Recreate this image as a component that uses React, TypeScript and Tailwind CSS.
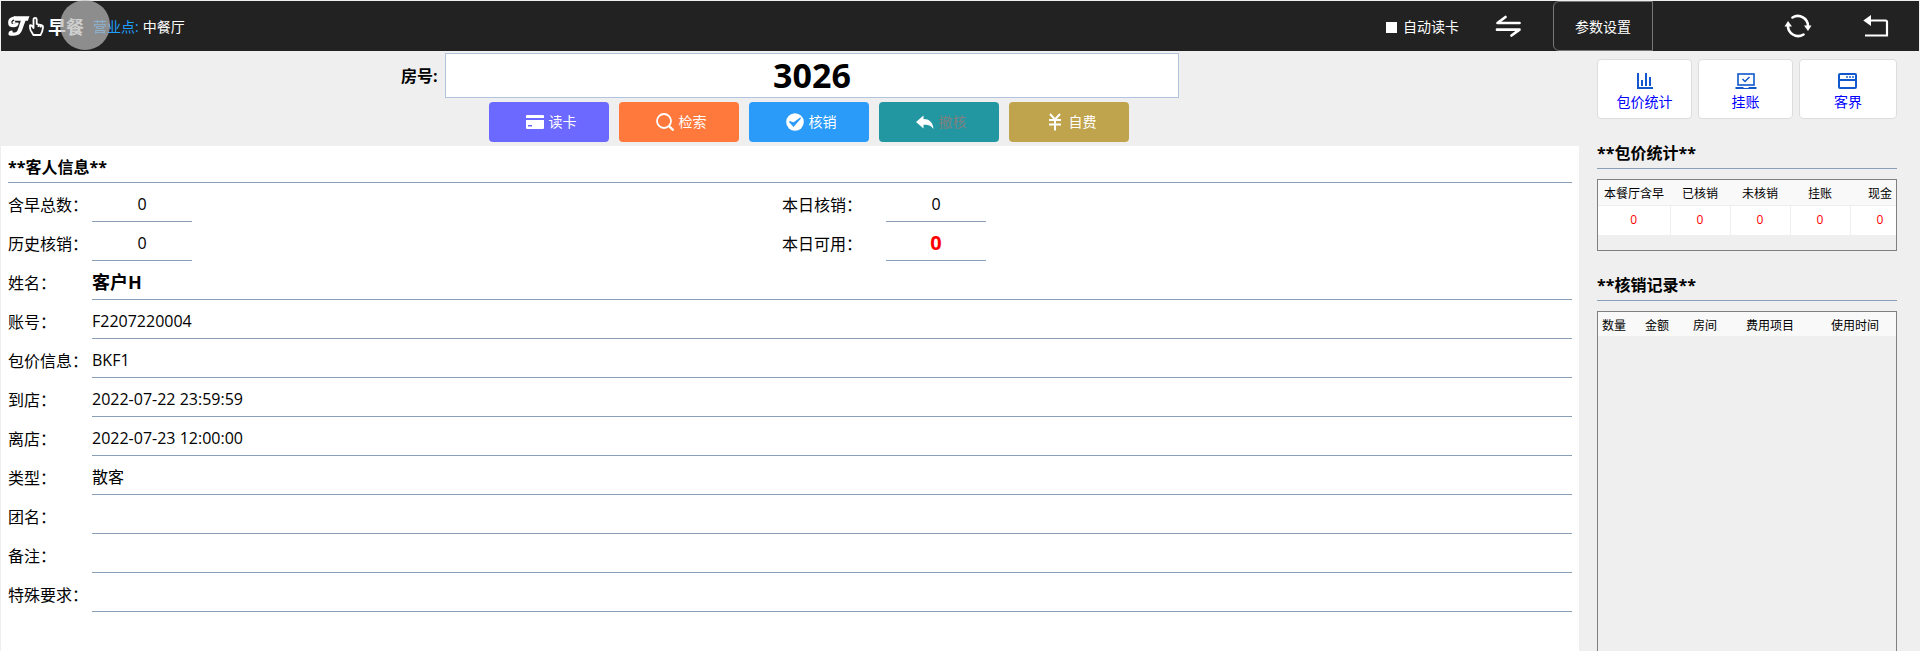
import { useState } from 'react'
import type { ReactNode } from 'react'

type Field = {
  id: string
  label: string
  value: string
  className?: string
}

const counters: Field[][] = [
  [
    { id: 'total', label: '含早总数：', value: '0' },
    { id: 'today-used', label: '本日核销：', value: '0' }
  ],
  [
    { id: 'history-used', label: '历史核销：', value: '0' },
    { id: 'today-left', label: '本日可用：', value: '0', className: 'text-xl font-bold text-[#ff0000]' }
  ]
]

const details: Field[] = [
  { id: 'name', label: '姓名：', value: '客户H', className: 'text-lg font-bold' },
  { id: 'account', label: '账号：', value: 'F2207220004' },
  { id: 'package', label: '包价信息：', value: 'BKF1' },
  { id: 'arrive', label: '到店：', value: '2022-07-22 23:59:59' },
  { id: 'leave', label: '离店：', value: '2022-07-23 12:00:00' },
  { id: 'type', label: '类型：', value: '散客' },
  { id: 'group', label: '团名：', value: '' },
  { id: 'remark', label: '备注：', value: '' },
  { id: 'special', label: '特殊要求：', value: '' }
]

const summary = [
  { title: '本餐厅含早', value: 0, width: 'w-[72px]' },
  { title: '已核销', value: 0, width: 'w-[60px]' },
  { title: '未核销', value: 0, width: 'w-[60px]' },
  { title: '挂账', value: 0, width: 'w-[60px]' },
  { title: '现金', value: 0, width: 'w-[60px]' }
]

const recordColumns = [
  { title: '数量', width: 'w-8' },
  { title: '金额', width: 'w-[54px]' },
  { title: '房间', width: 'w-[42px]' },
  { title: '费用项目', width: 'w-[88px]' },
  { title: '使用时间', width: 'w-[82px]' }
]

function Logo() {
  return (
    <svg className="h-5 w-9" viewBox="0 0 36 20" fill="none">
      <path
        d="M6 .3H21.500L19.800 4.800H17.500L14.300 13.500C12.800 17.700 10.500 19.700 6 19.700H2.500C.7 19.700 0 18.500.6 16.800C1.200 15.200 2.600 14.300 4.300 14.500L4.800 16.400H6.500C8.300 16.400 9.200 15.500 9.900 13.500L12.800 4.800H6z"
        fill="white"
      />
      <path d="M7.500 2H6C3.500 2.300 1.700 4.200 1.700 6.400C1.700 8.600 3.300 9.700 5.300 9.700C7.500 9.700 9 8.300 9.200 6.600" stroke="white" strokeWidth="3.200" />
      <circle cx="6" cy="6.500" r="1.400" fill="white" />
      <path
        d="M25.500 12V3.500a1.600 1.600 0 0 1 3.200 0V8l4.800 1.200c1.200.4 1.700 1.200 1.500 2.400l-.8 3.800-1.600 3.600h-7.200l-2.600-4.400c-1-1.800-.9-3.600-.8-5.200.8-.4 1.800 0 2 .8zM30.500 8.500v2.500M32.700 9v2.500"
        stroke="white"
        strokeWidth="1.800"
        strokeLinejoin="round"
      />
    </svg>
  )
}

function SwapIcon() {
  return (
    <svg className="h-6 w-[26px]" viewBox="0 0 26 24" fill="none" stroke="white" strokeWidth="2.700" strokeLinecap="round">
      <path d="M24.500 9H2.500L10.500 3" strokeLinejoin="round" />
      <path d="M2 15.700h22.500L16.500 21.500" strokeLinejoin="round" />
    </svg>
  )
}

function RefreshIcon() {
  return (
    <svg className="h-6 w-7" viewBox="0 0 28 24" fill="none">
      <path d="M8.500 3.500A10.200 10.200 0 0 1 24 12.500" stroke="white" strokeWidth="2.600" strokeLinecap="round" />
      <path d="M19.500 20.500A10.200 10.200 0 0 1 4 11" stroke="white" strokeWidth="2.600" strokeLinecap="round" />
      <path d="M20 11.500h7.500L24 17z" fill="white" />
      <path d="M.5 12.500H8L4 7z" fill="white" />
    </svg>
  )
}

function BackIcon() {
  return (
    <svg className="h-6 w-[26px]" viewBox="0 0 26 24" fill="none">
      <path d="M6 6.500h16.500q1.500 0 1.500 1.500V21.500H2" stroke="white" strokeWidth="2.200" />
      <path d="M.3 6.500L8 1V12z" fill="white" />
    </svg>
  )
}

const cardIcon = (
  <svg className="size-[18px]" viewBox="0 0 18 18">
    <path d="M1 2h16q1 0 1 1v2H0V3q0-1 1-1zM0 7h18v8q0 1-1 1H1q-1 0-1-1z" fill="white" />
    <path d="M2 12h4v1.500H2z" fill="#6b69ff" />
  </svg>
)

const searchIcon = (
  <svg className="size-[18px]" viewBox="0 0 18 18" fill="none" stroke="white">
    <circle cx="8" cy="8" r="7" strokeWidth="1.800" />
    <path d="M13 13l4.500 4.500" strokeWidth="2.400" />
  </svg>
)

const checkIcon = (
  <svg className="size-[18px]" viewBox="0 0 18 18" fill="none">
    <circle cx="9" cy="9" r="8.800" fill="white" />
    <path d="M3.500 8.500L7.500 13L14.500 5L7.700 10z" fill="#2b9bfa" stroke="#2b9bfa" strokeWidth="1.200" />
  </svg>
)

const undoIcon = (
  <svg className="size-[18px]" viewBox="0 0 18 18">
    <path d="M0 9L7.500 2.500V6C13 6 17 9 17.500 16C15 12.500 12.500 11.500 7.500 11.700V15.500z" fill="white" />
  </svg>
)

const yenIcon = (
  <svg className="size-[18px]" viewBox="0 0 18 18" fill="none" stroke="white" strokeWidth="2">
    <path d="M4 1l5 5.500L14 1M9 6v11.500M3 7h12M3 11.500h12" />
  </svg>
)

const chartIcon = (
  <svg className="size-5" viewBox="0 0 20 20" fill="none" stroke="#1058cc" strokeWidth="2">
    <path d="M3 2v15h15M7 15V9M11 15V2M15 15V6" />
  </svg>
)

const laptopIcon = (
  <svg className="h-5 w-[22px]" viewBox="0 0 22 20" fill="none">
    <rect x="3" y="3" width="16" height="11" stroke="#1058cc" strokeWidth="1.600" />
    <path d="M7.500 8l2.500 2.500L14.500 6" stroke="#1058cc" strokeWidth="1.500" />
    <path d="M.5 16h8v1h5v-1h8v2h-21z" fill="#1058cc" />
  </svg>
)

const windowIcon = (
  <svg className="size-5" viewBox="0 0 20 20" fill="none" stroke="#1058cc">
    <rect x="1" y="3" width="17" height="14" rx="1" strokeWidth="2" />
    <path d="M1 9h17" strokeWidth="2" />
    <path d="M8 6h8" strokeWidth="2" strokeDasharray="2 1" opacity=".7" />
  </svg>
)

const actions = [
  { label: '读卡', icon: cardIcon, color: 'bg-[#6b69ff]' },
  { label: '检索', icon: searchIcon, color: 'bg-[#ff783c]' },
  { label: '核销', icon: checkIcon, color: 'bg-[#2b9bfa]' },
  { label: '撤核', icon: undoIcon, color: 'bg-[#2297a1]', disabled: true },
  { label: '自费', icon: yenIcon, color: 'bg-[#bfa44d]' }
]

const shortcuts = [
  { label: '包价统计', icon: chartIcon, width: 'w-[95px]' },
  { label: '挂账', icon: laptopIcon, width: 'w-[95px]' },
  { label: '客界', icon: windowIcon, width: 'flex-1' }
]

function SectionTitle({ children }: { children: ReactNode }) {
  return <h2 className="h-8 border-b border-[#8aa0b8] text-base leading-8 font-bold">{children}</h2>
}

function DetailRow({ field }: { field: Field }) {
  return (
    <div className="flex h-[39px]">
      <label htmlFor={field.id} className="w-[84px] shrink-0 leading-11 whitespace-nowrap">
        {field.label}
      </label>
      <input
        id={field.id}
        readOnly
        defaultValue={field.value}
        className={`min-w-0 flex-1 border-b border-[#8aa0b8] pt-1 outline-none ${field.className ?? ''}`}
      />
    </div>
  )
}

function Counter({ field, wide }: { field: Field; wide: boolean }) {
  return (
    <div className="flex h-[39px] w-1/2">
      <label htmlFor={field.id} className={`shrink-0 leading-11 whitespace-nowrap ${wide ? 'w-[104px]' : 'w-[84px]'}`}>
        {field.label}
      </label>
      <input
        id={field.id}
        readOnly
        defaultValue={field.value}
        className={`w-[100px] border-b border-[#8aa0b8] pt-1 text-center outline-none ${field.className ?? ''}`}
      />
    </div>
  )
}

export default function App() {
  const [room, setRoom] = useState('3026')
  const [autoRead, setAutoRead] = useState(false)

  return (
    <div className="flex min-h-screen flex-col bg-[#efefef] px-px pt-px font-['Open_Sans','Noto_Sans_CJK_SC',sans-serif] text-base text-black">
      <header className="relative flex h-[50px] items-center bg-[#222] pl-[7px] text-sm text-white">
        <Logo />
        <h1 className="ml-1 pt-0.5 text-lg font-bold">早餐</h1>
        <span className="ml-[9px] pt-0.5 text-[#1e9fff]">营业点:</span>
        <span className="ml-1 pt-0.5">中餐厅</span>
        <span className="absolute -top-px left-[59px] size-[50px] rounded-full bg-[#bbb]/70" />

        <label className="ml-auto flex items-center gap-1.5 pt-0.5">
          <input
            type="checkbox"
            checked={autoRead}
            onChange={(event) => setAutoRead(event.target.checked)}
            className="size-[11px] appearance-none bg-white checked:bg-[#1e9fff]"
          />
          自动读卡
        </label>
        <button aria-label="切换" className="ml-9">
          <SwapIcon />
        </button>
        <button className="ml-8 h-full w-[100px] rounded-l-md border border-[#777] pt-0.5">参数设置</button>
        <button aria-label="刷新" className="ml-[131px]">
          <RefreshIcon />
        </button>
        <button aria-label="返回" className="mr-[30px] ml-[51px]">
          <BackIcon />
        </button>
      </header>

      <div className="flex flex-1">
        <main className="flex min-w-0 flex-1 flex-col">
          <div className="flex h-[95px] flex-col items-center pt-0.5">
            <div className="flex w-[778px] max-w-full items-center gap-2">
              <label htmlFor="room" className="w-9 shrink-0 font-bold whitespace-nowrap">
                房号:
              </label>
              <input
                id="room"
                value={room}
                onChange={(event) => setRoom(event.target.value)}
                className="h-[45px] min-w-0 flex-1 border border-[#b0c4e0] bg-white text-center text-[34px] font-bold outline-none"
              />
            </div>
            <div className="mt-1 flex gap-2.5 pl-[38px]">
              {actions.map((action) => (
                <button
                  key={action.label}
                  disabled={action.disabled}
                  className={`flex h-10 w-[120px] items-center justify-center gap-[5px] rounded pl-1 text-sm text-white disabled:text-[#808080] ${action.color}`}
                >
                  {action.icon}
                  {action.label}
                </button>
              ))}
            </div>
          </div>

          <section className="flex-1 bg-white px-[7px] pt-[5px]">
            <SectionTitle>**客人信息**</SectionTitle>
            <div className="pr-4">
              {counters.map((row) => (
                <div key={row[0].id} className="flex">
                  {row.map((field, index) => (
                    <Counter key={field.id} field={field} wide={index === 1} />
                  ))}
                </div>
              ))}
            </div>
            {details.map((field) => (
              <DetailRow key={field.id} field={field} />
            ))}
          </section>
        </main>

        <aside className="mr-[22px] ml-[18px] flex w-[300px] shrink-0 flex-col pt-2">
          <div className="flex gap-1.5">
            {shortcuts.map((item) => (
              <button
                key={item.label}
                className={`flex h-[60px] flex-col items-center justify-center gap-px rounded border border-[#ddd] bg-white pt-1 text-sm text-[#0000ff] ${item.width}`}
              >
                {item.icon}
                {item.label}
              </button>
            ))}
          </div>

          <div className="mt-[18px]">
            <SectionTitle>**包价统计**</SectionTitle>
          </div>
          <div className="mt-2.5 h-[72px] overflow-hidden border border-[#808080]">
            <table className="w-[312px] table-fixed text-center text-xs">
              <thead>
                <tr className="h-[25px] bg-[#f9f9f9]">
                  {summary.map((col) => (
                    <th key={col.title} className={`border-b border-[#eee] p-0 pt-1 font-normal ${col.width}`}>
                      {col.title}
                    </th>
                  ))}
                </tr>
              </thead>
              <tbody>
                <tr className="h-[30px] bg-white text-[#ff0000]">
                  {summary.map((col) => (
                    <td key={col.title} className="border-r border-[#eee] p-0">
                      {col.value}
                    </td>
                  ))}
                </tr>
              </tbody>
            </table>
          </div>

          <div className="mt-[18px]">
            <SectionTitle>**核销记录**</SectionTitle>
          </div>
          <div className="mt-2.5 flex-1 overflow-hidden border border-b-0 border-[#808080]">
            <table className="w-full table-fixed text-center text-xs">
              <thead>
                <tr className="h-6 bg-[#f9f9f9]">
                  {recordColumns.map((col) => (
                    <th key={col.title} className={`p-0 pt-1 font-normal ${col.width}`}>
                      {col.title}
                    </th>
                  ))}
                </tr>
              </thead>
            </table>
          </div>
        </aside>
      </div>
    </div>
  )
}
